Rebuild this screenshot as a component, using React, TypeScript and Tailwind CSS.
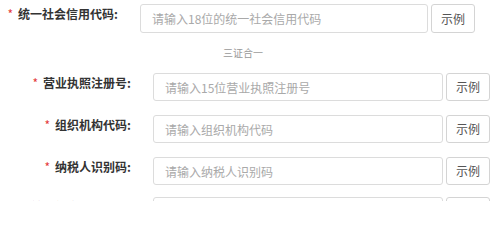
const font = { fontFamily: '"Noto Sans CJK SC", "Noto Sans", sans-serif' };

type RowProps = {
  label: string;
  placeholder: string;
  labelW: string;
  inputW: string;
  h: string;
};

function FieldRow({ label, placeholder, labelW, inputW, h }: RowProps) {
  return (
    <div className="flex items-start">
      <div className={`${labelW} flex shrink-0 justify-end pt-[2px] text-[12px] leading-[16px]`}>
        <span className="mr-[5px] text-[#e4393c]">*</span>
        <span className="font-bold text-[#333]">{label}:</span>
      </div>
      <input
        className={`${inputW} ${h} ml-[22px] shrink-0 rounded-[3px] border border-[#dcdcdc] bg-white pl-[11px] text-[12px] text-[#333] outline-none placeholder:text-[#a9a9a9]`}
        placeholder={placeholder}
      />
      <button
        className={`${h} ml-[3px] w-[44px] shrink-0 rounded-[3px] border border-[#d4d4d4] bg-white text-[12px] text-[#555]`}
      >
        示例
      </button>
    </div>
  );
}

export default function App() {
  return (
    <div className="h-[201px] w-[500px] overflow-hidden bg-white" style={font}>
      <div className="pt-[4px]">
        <FieldRow
          label="统一社会信用代码"
          placeholder="请输入18位的统一社会信用代码"
          labelW="w-[118px]"
          inputW="w-[288px]"
          h="h-[29px]"
        />
      </div>

      {/* 三证合一 */}
      <div className="pl-[223px] pt-[14px] text-[10px] leading-[12px] text-[#999]">三证合一</div>

      <div className="flex flex-col gap-[14px] pt-[14px]">
        <FieldRow
          label="营业执照注册号"
          placeholder="请输入15位营业执照注册号"
          labelW="w-[131px]"
          inputW="w-[290px]"
          h="h-[28px]"
        />
        <FieldRow
          label="组织机构代码"
          placeholder="请输入组织机构代码"
          labelW="w-[131px]"
          inputW="w-[290px]"
          h="h-[28px]"
        />
        <FieldRow
          label="纳税人识别码"
          placeholder="请输入纳税人识别码"
          labelW="w-[131px]"
          inputW="w-[290px]"
          h="h-[28px]"
        />
        <div className="-mt-[2px]">
          <FieldRow
            label="统一社会信用代码"
            placeholder="请输入18位的统一社会信用代码"
            labelW="w-[131px]"
            inputW="w-[290px]"
            h="h-[28px]"
          />
        </div>
      </div>
    </div>
  );
}
